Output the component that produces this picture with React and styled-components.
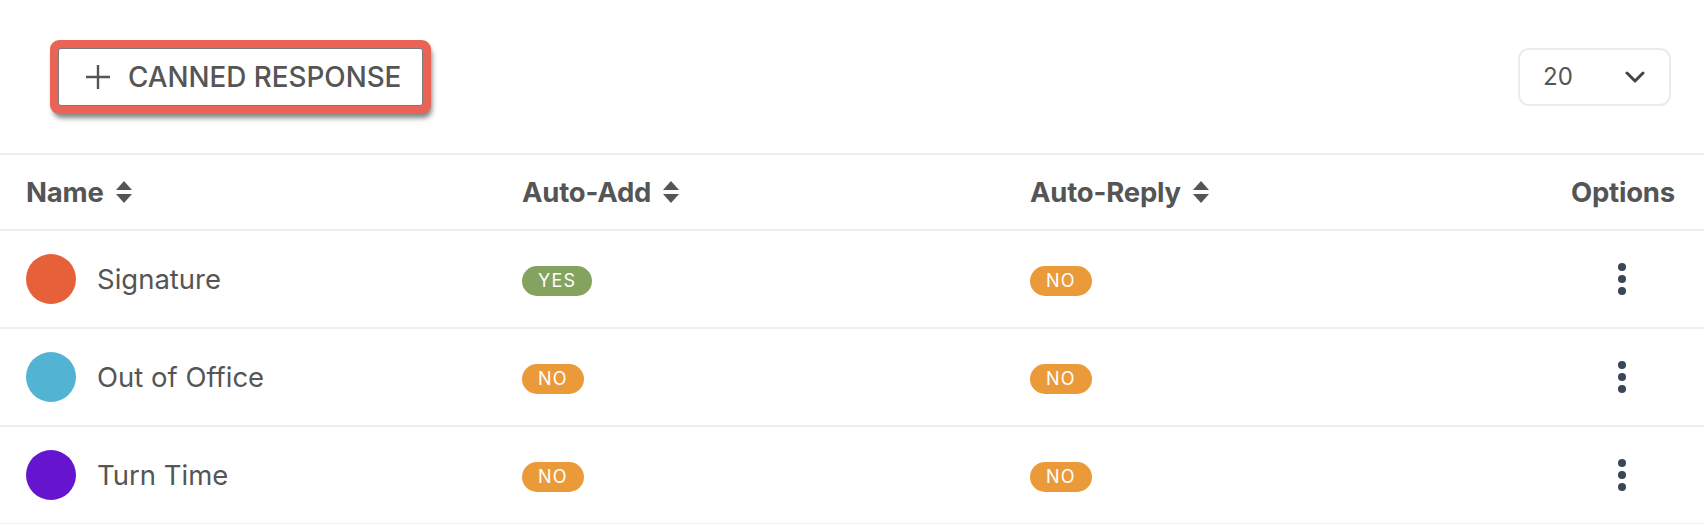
import React from 'react';
import styled, { createGlobalStyle } from 'styled-components';

const GlobalStyle = createGlobalStyle`
    body {
        margin: 0;
        background: #FFFFFF;
        font-family: Inter, "Noto Sans", "Liberation Sans", sans-serif;
        color: #555555;
    }
`;

const Page = styled.div`
    width: 1704px;
`;

const Toolbar = styled.div`
    display: flex;
    align-items: center;
    justify-content: space-between;
    height: 153px;
    padding: 0 33px 0 58px;
    border-bottom: 2px solid #EEEEEE;
    box-sizing: content-box;
`;

const AddButton = styled.button`
    display: flex;
    align-items: center;
    gap: 18px;
    width: 365px;
    height: 58px;
    padding: 0 0 0 27px;
    box-sizing: border-box;
    border: 1px solid #7A7A7A;
    border-radius: 3px;
    background: #FFFFFF;
    color: #555555;
    font-family: inherit;
    font-size: 27.8px;
    font-weight: 450;
    cursor: pointer;
    box-shadow: 0 0 0 8px #EA6455, 2px 5px 5px 7px rgba(50, 50, 50, 0.6);
`;

const PageSize = styled.div`
    display: flex;
    align-items: center;
    justify-content: space-between;
    width: 153px;
    height: 58px;
    box-sizing: border-box;
    padding: 0 24px 0 23px;
    border: 2px solid #EBEBEB;
    border-radius: 11px;
    font-size: 24px;
    color: #555555;
`;

const Row = styled.div`
    display: grid;
    grid-template-columns: 496px 508px 1fr auto;
    align-items: center;
    height: ${p => (p.$header ? '74px' : '96px')};
    padding: 0 29px 0 26px;
    border-bottom: 2px solid #EEEEEE;
`;

const HeadCell = styled.div`
    display: flex;
    align-items: center;
    gap: 12px;
    font-size: 27.5px;
    font-weight: 700;
    letter-spacing: -0.2px;
    color: #555555;
    ${p => p.$right && 'justify-content: flex-end;'}
`;

const NameCell = styled.div`
    display: flex;
    align-items: center;
    gap: 21px;
    font-size: 27.5px;
    color: #555555;
`;

const Dot = styled.span`
    width: 50px;
    height: 50px;
    border-radius: 50%;
    background: ${p => p.$color};
    flex-shrink: 0;
`;

const Badge = styled.span`
    display: inline-flex;
    align-items: center;
    justify-content: center;
    height: 30px;
    padding: 0 16px;
    margin-top: 3px;
    border-radius: 15px;
    background: ${p => (p.$yes ? '#83A35F' : '#EB9A3A')};
    color: #FFFFFF;
    font-size: 18px;
    font-weight: 400;
    letter-spacing: 1.2px;
    justify-self: start;
`;

const OptionsCell = styled.div`
    width: 106px;
    display: flex;
    justify-content: center;
`;

const MenuButton = styled.button`
    padding: 0;
    border: none;
    background: none;
    cursor: pointer;
    display: flex;
`;

function SortIcon() {
    return (
        <svg width="16" height="22" viewBox="0 0 16 22">
            <path d="M8 0 L16 9 H0 Z" fill="#555555" />
            <path d="M0 13 H16 L8 22 Z" fill="#555555" />
        </svg>
    );
}

function PlusIcon() {
    return (
        <svg width="24" height="24" viewBox="0 0 24 24">
            <path d="M12 0 V24 M0 12 H24" stroke="#555555" strokeWidth="2.4" fill="none" />
        </svg>
    );
}

function Chevron() {
    return (
        <svg width="20" height="12" viewBox="0 0 20 12">
            <polyline points="2,2 10,10 18,2" stroke="#444444" strokeWidth="3" fill="none" strokeLinecap="round" strokeLinejoin="round" />
        </svg>
    );
}

function MoreIcon() {
    return (
        <svg width="8" height="32" viewBox="0 0 8 32">
            <circle cx="4" cy="4" r="4" fill="#3A4758" />
            <circle cx="4" cy="16" r="4" fill="#3A4758" />
            <circle cx="4" cy="28" r="4" fill="#3A4758" />
        </svg>
    );
}

const responses = [
    { name: 'Signature', color: '#E6603A', autoAdd: true, autoReply: false },
    { name: 'Out of Office', color: '#52B3D3', autoAdd: false, autoReply: false },
    { name: 'Turn Time', color: '#6415CD', autoAdd: false, autoReply: false },
];

function App() {
    return (
        <Page>
            <GlobalStyle />
            <Toolbar>
                <AddButton>
                    <PlusIcon />
                    CANNED RESPONSE
                </AddButton>
                <PageSize>
                    20
                    <Chevron />
                </PageSize>
            </Toolbar>
            <Row $header>
                <HeadCell>Name <SortIcon /></HeadCell>
                <HeadCell>Auto-Add <SortIcon /></HeadCell>
                <HeadCell>Auto-Reply <SortIcon /></HeadCell>
                <HeadCell $right>Options</HeadCell>
            </Row>
            {responses.map(r => (
                <Row key={r.name}>
                    <NameCell>
                        <Dot $color={r.color} />
                        {r.name}
                    </NameCell>
                    <div><Badge $yes={r.autoAdd}>{r.autoAdd ? 'YES' : 'NO'}</Badge></div>
                    <div><Badge $yes={r.autoReply}>{r.autoReply ? 'YES' : 'NO'}</Badge></div>
                    <OptionsCell>
                        <MenuButton><MoreIcon /></MenuButton>
                    </OptionsCell>
                </Row>
            ))}
        </Page>
    );
}

export default App;
